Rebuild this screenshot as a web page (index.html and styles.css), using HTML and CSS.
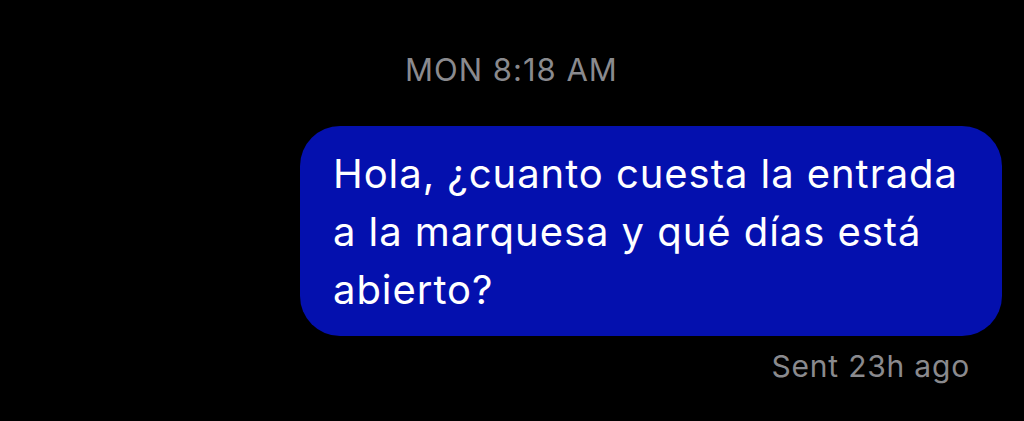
FILE: index.html
```html
<!DOCTYPE html>
<html lang="en">
<head>
<meta charset="UTF-8">
<meta name="viewport" content="width=device-width, initial-scale=1.0">
<title>Messages</title>
<link rel="stylesheet" href="styles.css">
</head>
<body>
    <div class="thread">
        <div class="timestamp">MON 8:18 AM</div>
        <div class="row">
            <div class="bubble">Hola, ¿cuanto cuesta la entrada a la marquesa y qué días está abierto?</div>
        </div>
        <div class="status">Sent 23h ago</div>
    </div>
</body>
</html>
```
FILE: styles.css
```css
body {
    margin: 0;
    padding: 0;
    background-color: #000;
    font-family: Inter, "Liberation Sans", sans-serif;
    height: 100vh;
}
.thread {
    display: flex;
    flex-direction: column;
    padding-top: 52px;
}
.timestamp {
    align-self: flex-start;
    margin-left: 405px;
    color: #8a8a8e;
    font-size: 31px;
    line-height: 36px;
    letter-spacing: 1px;
}
.row {
    display: flex;
    justify-content: flex-end;
    padding-right: 22px;
    margin-top: 38px;
}
.bubble {
    width: 702px;
    height: 210px;
    box-sizing: border-box;
    padding: 19px 36px 0 33px;
    background-color: #0410ae;
    color: #fff;
    border-radius: 40px;
    font-size: 40px;
    line-height: 58px;
    letter-spacing: 0.95px;
}
.status {
    align-self: flex-end;
    margin-right: 54px;
    margin-top: 12px;
    color: #8a8a8e;
    font-size: 30px;
    line-height: 36px;
    letter-spacing: 0.8px;
}
```
